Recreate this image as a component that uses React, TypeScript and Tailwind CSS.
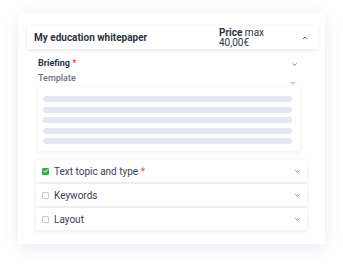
import { ChevronDown, ChevronUp, Check } from 'lucide-react';

const rows = [
  { label: 'Text topic and type', checked: true, required: true },
  { label: 'Keywords', checked: false, required: false },
  { label: 'Layout', checked: false, required: false },
];

export default function App() {
  return (
    <div className="w-[343px] h-[268px] bg-white pt-[13px] pl-[18px] font-['Roboto',sans-serif] text-[#374151]">
      <div className="w-[307px] h-[231px] bg-white shadow-[0_4px_16px_rgba(100,110,160,0.14)] pt-[13px] px-[9px]">
        {/* header */}
        <div className="h-[23px] -mr-[2px] flex items-center bg-white shadow-[0_1px_4px_rgba(0,0,0,0.1)] pl-[7px] pr-[9px]">
          <span className="text-[10px] font-bold text-[#2d3340] flex-1">My education whitepaper</span>
          <div className="w-[82px] text-[10px] leading-[10.5px] text-[#2d3340] pt-[1px]">
            <div><span className="font-bold">Price</span> max</div>
            <div>40,00€</div>
          </div>
          <ChevronUp className="w-[8px] h-[8px] text-[#6b7280]" strokeWidth={3} />
        </div>

        {/* briefing */}
        <div className="pl-[11px] pr-[18px] pt-[9px]">
          <div className="flex items-center h-[12px]">
            <span className="text-[9px] font-bold text-[#2d3340] flex-1">
              Briefing <span className="text-[#ef4444]">*</span>
            </span>
            <ChevronDown className="w-[7px] h-[7px] text-[#6b7280]" strokeWidth={3} />
          </div>
          <div className="flex items-center h-[12px] mt-[3px]">
            <span className="text-[9px] font-medium text-[#6b7280] flex-1">Template</span>
            <svg width="6" height="4" viewBox="0 0 6 4" className="mt-[10px] mr-[2px]"><path d="M0 0h6L3 3z" fill="#c8ccd4" /></svg>
          </div>
          <div className="w-[262px] h-[64px] mt-[2px] bg-white shadow-[0_1px_4px_rgba(0,0,0,0.08)] pl-[5px] pr-[8px] pt-[9px] flex flex-col gap-[4.5px]">
            {[0, 1, 2, 3, 4].map((i) => (
              <div key={i} className="h-[6px] rounded-full bg-[#e2e7f0]" />
            ))}
          </div>
        </div>

        {/* sections */}
        <div className="mt-[9px] flex flex-col gap-[2px]">
          {rows.map((r) => (
            <div key={r.label} className="h-[22px] mx-[9px] flex items-center bg-white shadow-[0_1px_4px_rgba(0,0,0,0.1)] pl-[6px] pr-[6px]">
              {r.checked ? (
                <span className="w-[7px] h-[7px] rounded-[1px] bg-[#2fb344] flex items-center justify-center">
                  <Check className="w-[6px] h-[6px] text-white" strokeWidth={4} />
                </span>
              ) : (
                <span className="w-[7px] h-[7px] rounded-[1px] border border-[#c5c9d0]" />
              )}
              <span className="ml-[5px] text-[10px] text-[#3a4050] flex-1">
                {r.label} {r.required && <span className="text-[#ef4444]">*</span>}
              </span>
              <ChevronDown className="w-[7px] h-[7px] text-[#6b7280]" strokeWidth={3} />
            </div>
          ))}
        </div>
      </div>
    </div>
  );
}
